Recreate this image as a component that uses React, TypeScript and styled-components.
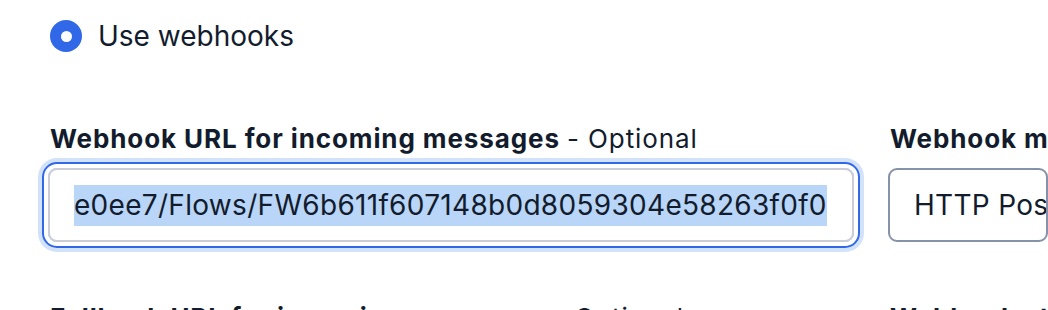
import React from "react";
import styled, { createGlobalStyle } from "styled-components";

const Global = createGlobalStyle`
  html, body { margin: 0; padding: 0; background: #ffffff; }
  body { font-family: Inter, "Noto Sans", sans-serif; color: #121c2d; }
`;

const Page = styled.div`
  padding: 20px 0 0 48px;
  width: 1048px;
  height: 310px;
  box-sizing: border-box;
  overflow: hidden;
`;

const RadioRow = styled.label`
  display: flex;
  align-items: center;
  gap: 16px;
  margin-left: 2px;
  height: 32px;
  font-size: 28px;
  font-weight: 400;
  color: #121c2d;
`;

const RadioDot = styled.span`
  width: 32px;
  height: 32px;
  border-radius: 50%;
  background: #3068e8;
  display: flex;
  align-items: center;
  justify-content: center;
  &::after {
    content: "";
    width: 11px;
    height: 11px;
    border-radius: 50%;
    background: #ffffff;
  }
`;

const Fields = styled.div`
  display: grid;
  grid-template-columns: 806px 1fr;
  column-gap: 34px;
  row-gap: 58px;
  margin-top: 69px;
`;

const Field = styled.div`
  display: flex;
  flex-direction: column;
  gap: 11px;
  min-width: 0;
`;

const Label = styled.div`
  font-size: 26px;
  line-height: 36px;
  font-weight: 700;
  letter-spacing: 0.9px;
  white-space: nowrap;
  padding-left: 2px;
`;

const Optional = styled.span`
  font-weight: 400;
`;

const InputBox = styled.div<{ $focused?: boolean }>`
  height: 74px;
  box-sizing: border-box;
  border: 2px solid ${(p) => (p.$focused ? "#cacdd8" : "#8891aa")};
  border-radius: 9px;
  display: flex;
  align-items: center;
  padding: 0 24px;
  font-size: 28px;
  letter-spacing: 0.3px;
  white-space: nowrap;
  overflow: ${(p) => (p.$focused ? "visible" : "hidden")};
  box-shadow: ${(p) =>
    p.$focused
      ? "0 0 0 4px #ffffff, 0 0 0 6px #3068e8, 0 0 0 10px #d3e2fb"
      : "none"};
`;

const Selected = styled.span`
  background: #b9d5f8;
  padding: 3px 0 4px;
`;

export default function App() {
  return (
    <>
      <Global />
      <Page>
        <RadioRow>
          <RadioDot />
          Use webhooks
        </RadioRow>
        <Fields>
          <Field>
            <Label>
              Webhook URL for incoming messages <Optional>- Optional</Optional>
            </Label>
            <InputBox $focused>
              <Selected>e0ee7/Flows/FW6b611f607148b0d8059304e58263f0f0</Selected>
            </InputBox>
          </Field>
          <Field>
            <Label>Webhook method</Label>
            <InputBox>HTTP Post</InputBox>
          </Field>
          <Field>
            <Label>
              Fallback URL for incoming messages <Optional>- Optional</Optional>
            </Label>
          </Field>
          <Field>
            <Label>Webhook status</Label>
          </Field>
        </Fields>
      </Page>
    </>
  );
}
